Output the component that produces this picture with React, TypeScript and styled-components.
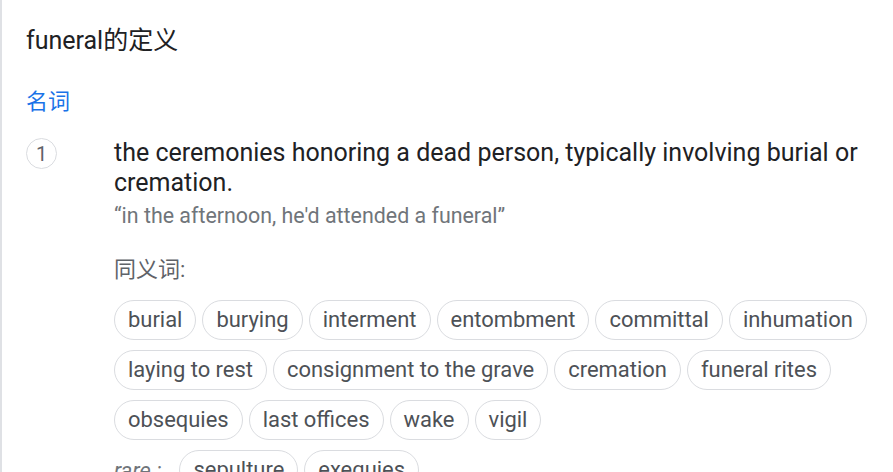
import React from 'react';
import styled, { createGlobalStyle } from 'styled-components';

const GlobalStyle = createGlobalStyle`
  html, body {
    margin: 0;
    padding: 0;
    background: #fff;
  }
  body {
    font-family: Roboto, Arial, "Noto Sans CJK SC", sans-serif;
    overflow: hidden;
  }
`

const Page = styled.div`
  border-left: 2px solid #dfe1e5;
  padding: 25px 18px 0 24px;
  min-height: 472px;
  box-sizing: border-box;
`

const Title = styled.div`
  font-size: 25px;
  line-height: 32px;
  color: #202124;
`

const PartOfSpeech = styled.div`
  margin-top: 31px;
  font-size: 22px;
  line-height: 28px;
  color: #1a73e8;
`

const SenseRow = styled.div`
  display: flex;
  margin-top: 22px;
`

const SenseNumber = styled.div`
  flex: 0 0 auto;
  width: 31px;
  height: 31px;
  box-sizing: border-box;
  border: 1px solid #dadce0;
  border-radius: 50%;
  display: flex;
  align-items: center;
  justify-content: center;
  font-size: 20px;
  color: #5f6368;
  margin-right: 57px;
`

const SenseBody = styled.div`
  flex: 1;
  min-width: 0;
`

const Definition = styled.div`
  font-size: 25px;
  line-height: 30px;
  color: #202124;
`

const Example = styled.div`
  margin-top: 4px;
  font-size: 21.4px;
  line-height: 28px;
  color: #70757a;
`

const Label = styled.div`
  margin-top: 26px;
  font-size: 22px;
  line-height: 28px;
  color: #5f6368;
`

const ChipList = styled.div`
  display: flex;
  flex-wrap: wrap;
  gap: 10px 6px;
  margin-top: 16px;
`

const Chip = styled.span`
  display: inline-block;
  height: 40px;
  box-sizing: border-box;
  padding: 0 13px;
  border: 1px solid #dadce0;
  border-radius: 20px;
  font-size: 21.95px;
  line-height: 38px;
  color: #4d5156;
  white-space: nowrap;
`

const RareRow = styled.div`
  display: flex;
  align-items: center;
  gap: 18px;
  margin-top: 10px;
`

const RareLabel = styled.span`
  font-size: 22px;
  font-style: italic;
  color: #70757a;
`

const RareChips = styled.div`
  display: flex;
  gap: 6px;
`

const synonyms = [
  'burial', 'burying', 'interment', 'entombment', 'committal', 'inhumation',
  'laying to rest', 'consignment to the grave', 'cremation', 'funeral rites',
  'obsequies', 'last offices', 'wake', 'vigil',
];

const rare = ['sepulture', 'exequies'];

const App: React.FC = () => {
  return (
    <>
      <GlobalStyle />
      <Page>
        <Title>funeral的定义</Title>
        <PartOfSpeech>名词</PartOfSpeech>
        <SenseRow>
          <SenseNumber>1</SenseNumber>
          <SenseBody>
            <Definition>
              the ceremonies honoring a dead person, typically involving burial or cremation.
            </Definition>
            <Example>“in the afternoon, he'd attended a funeral”</Example>
            <Label>同义词:</Label>
            <ChipList>
              {synonyms.map(s => <Chip key={s}>{s}</Chip>)}
            </ChipList>
            <RareRow>
              <RareLabel>rare :</RareLabel>
              <RareChips>
                {rare.map(s => <Chip key={s}>{s}</Chip>)}
              </RareChips>
            </RareRow>
          </SenseBody>
        </SenseRow>
      </Page>
    </>
  )
}

export default App;
